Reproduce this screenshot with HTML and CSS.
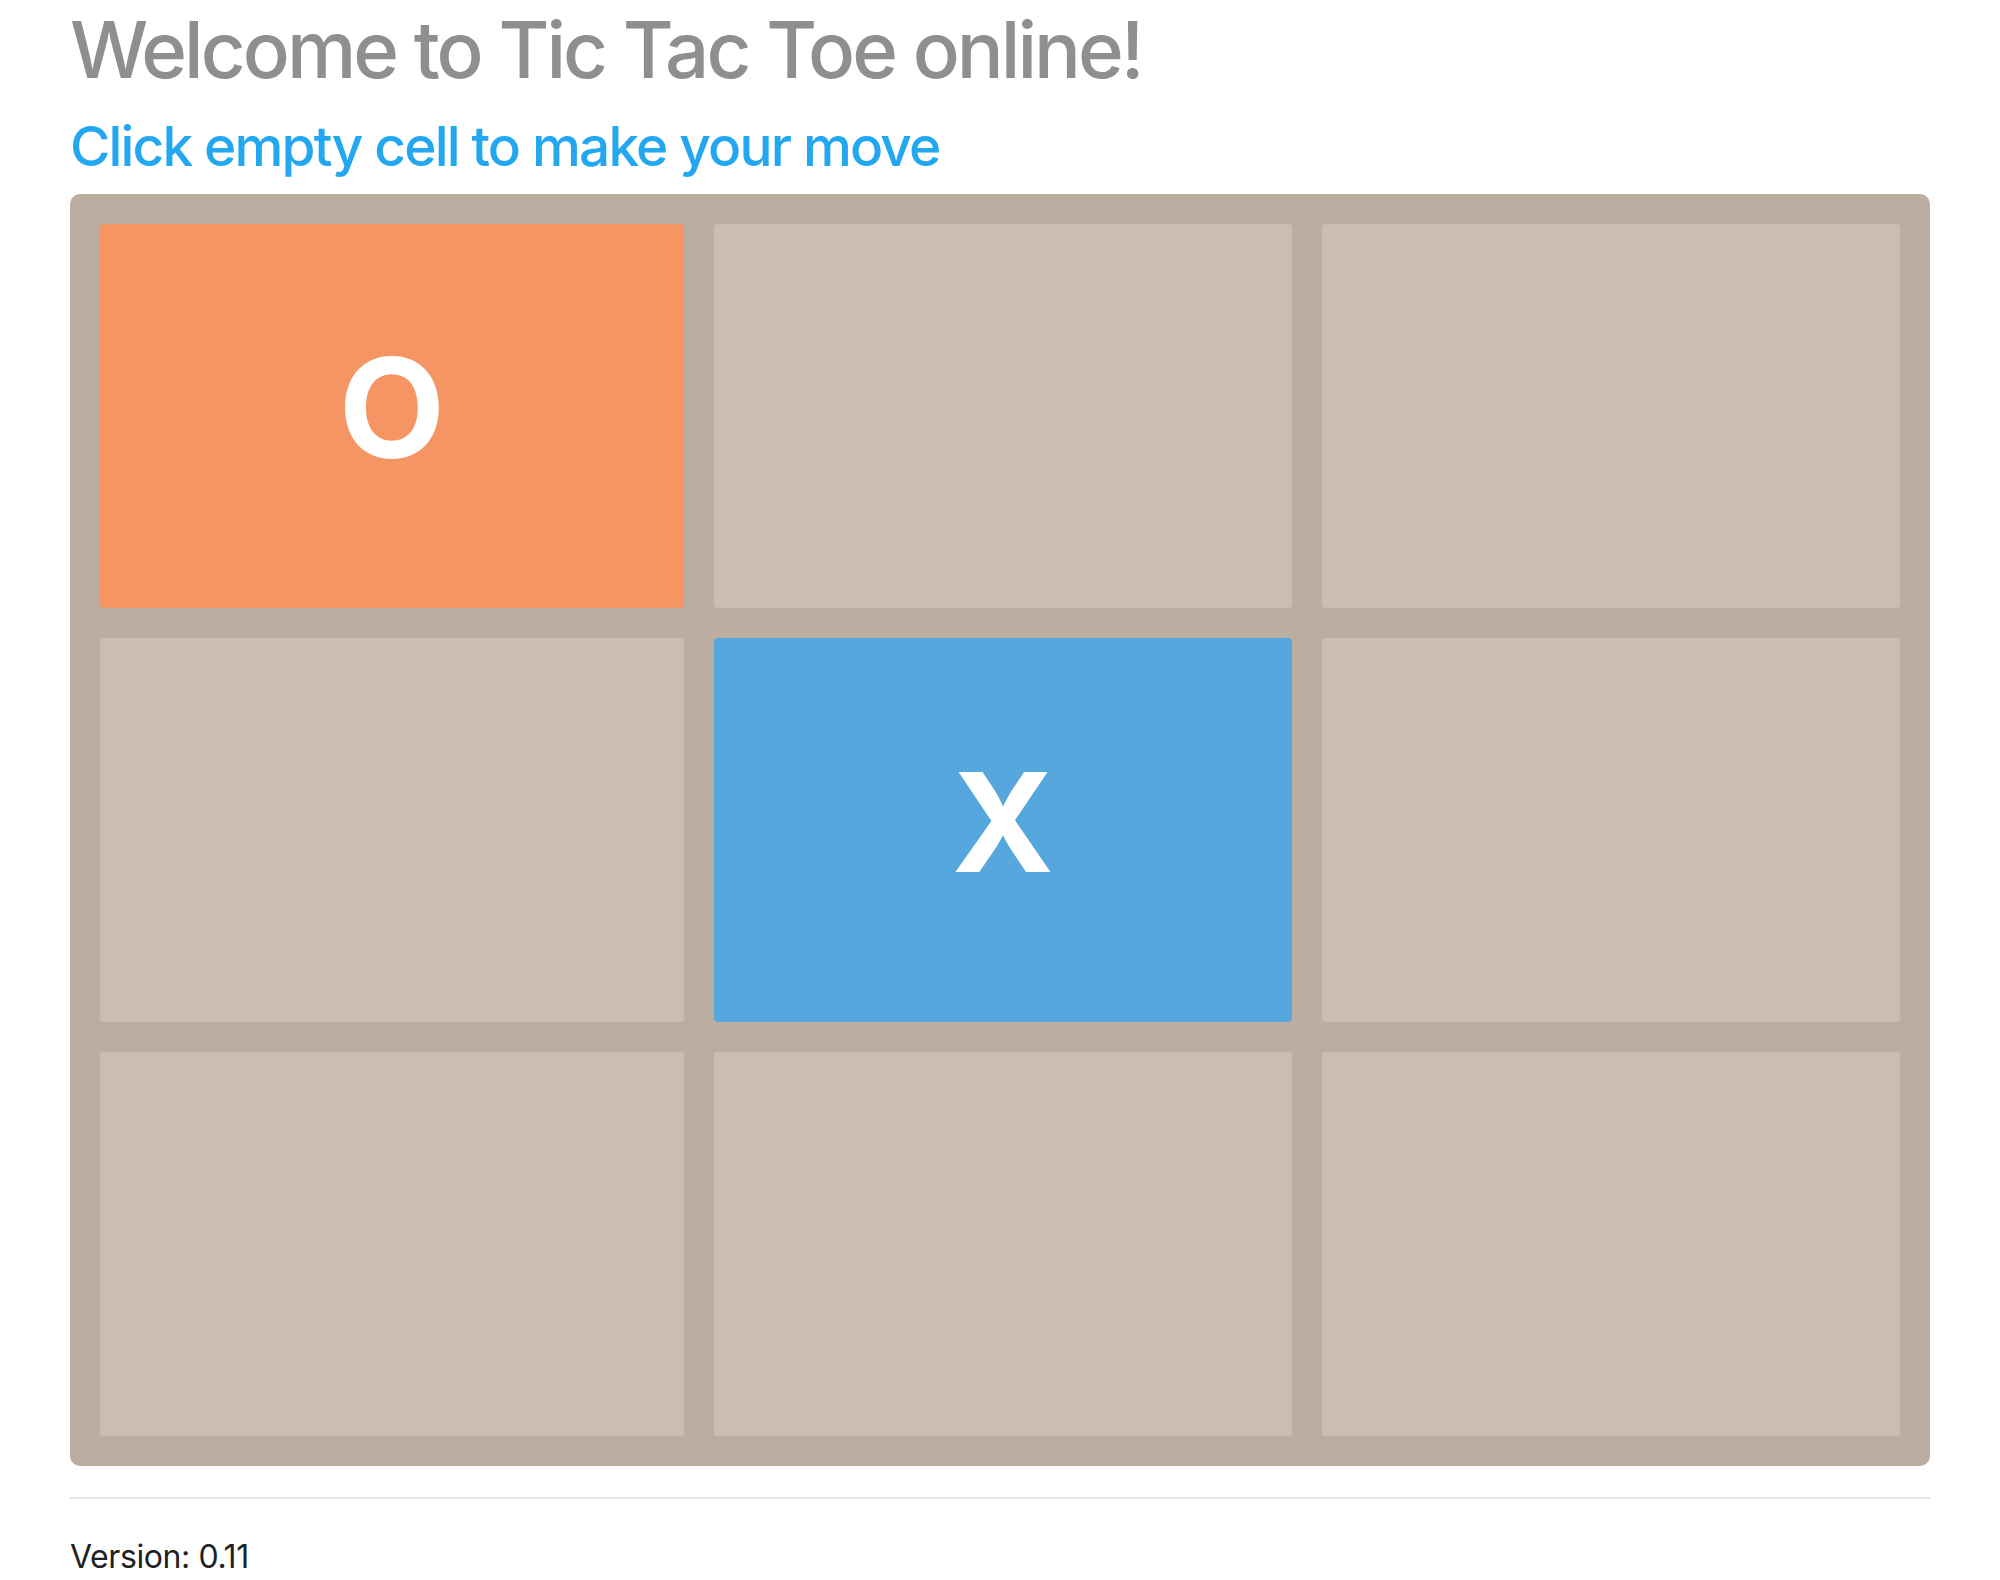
FILE: index.html
```html
<!DOCTYPE html>
<html lang="en">
<head>
<meta charset="utf-8">
<title>Tic Tac Toe</title>
<link rel="stylesheet" href="styles.css">
</head>
<body>
<div class="page">
  <h1 class="title">Welcome to Tic Tac Toe online!</h1>
  <h2 class="status">Click empty cell to make your move</h2>
  <div class="board">
    <div class="cell cell-o">O</div>
    <div class="cell"></div>
    <div class="cell"></div>
    <div class="cell"></div>
    <div class="cell cell-x">X</div>
    <div class="cell"></div>
    <div class="cell"></div>
    <div class="cell"></div>
    <div class="cell"></div>
  </div>
  <div class="rule"></div>
  <p class="version">Version: 0.11</p>
</div>
</body>
</html>
```

FILE: styles.css
```css
html, body {
  margin: 0;
  padding: 0;
  background: #ffffff;
}

body {
  font-family: Inter, "Liberation Sans", sans-serif;
}

.page {
  padding: 0 70px;
  width: 1860px;
}

.title {
  margin: 0;
  padding-top: 11px;
  font-size: 78px;
  line-height: 78px;
  font-weight: 500;
  color: #8f8f8f;
  letter-spacing: -3px;
}

.status {
  margin: 30px 0 0 0;
  font-size: 55px;
  line-height: 55px;
  font-weight: 500;
  color: #22a7f0;
  letter-spacing: -1.85px;
}

.board {
  margin-top: 20px;
  background: #bbada0;
  border-radius: 10px;
  padding: 30px;
  display: grid;
  grid-template-columns: 584px 578px 578px;
  grid-template-rows: repeat(3, 384px);
  gap: 30px;
}

.cell {
  background: #cbbdaf;
  border-radius: 4px;
  display: flex;
  align-items: center;
  justify-content: center;
  box-sizing: border-box;
  padding-bottom: 17px;
  color: #ffffff;
  font-size: 138px;
  line-height: 1;
  font-weight: 700;
}

.cell-o {
  background: #f49563;
}

.cell-x {
  background: #56a7dd;
}

.rule {
  margin-top: 31px;
  height: 2px;
  background: #e5e5e5;
}

.version {
  margin: 42px 0 0 0;
  font-size: 32px;
  line-height: 32px;
  color: #222222;
  letter-spacing: -0.4px;
}
```
